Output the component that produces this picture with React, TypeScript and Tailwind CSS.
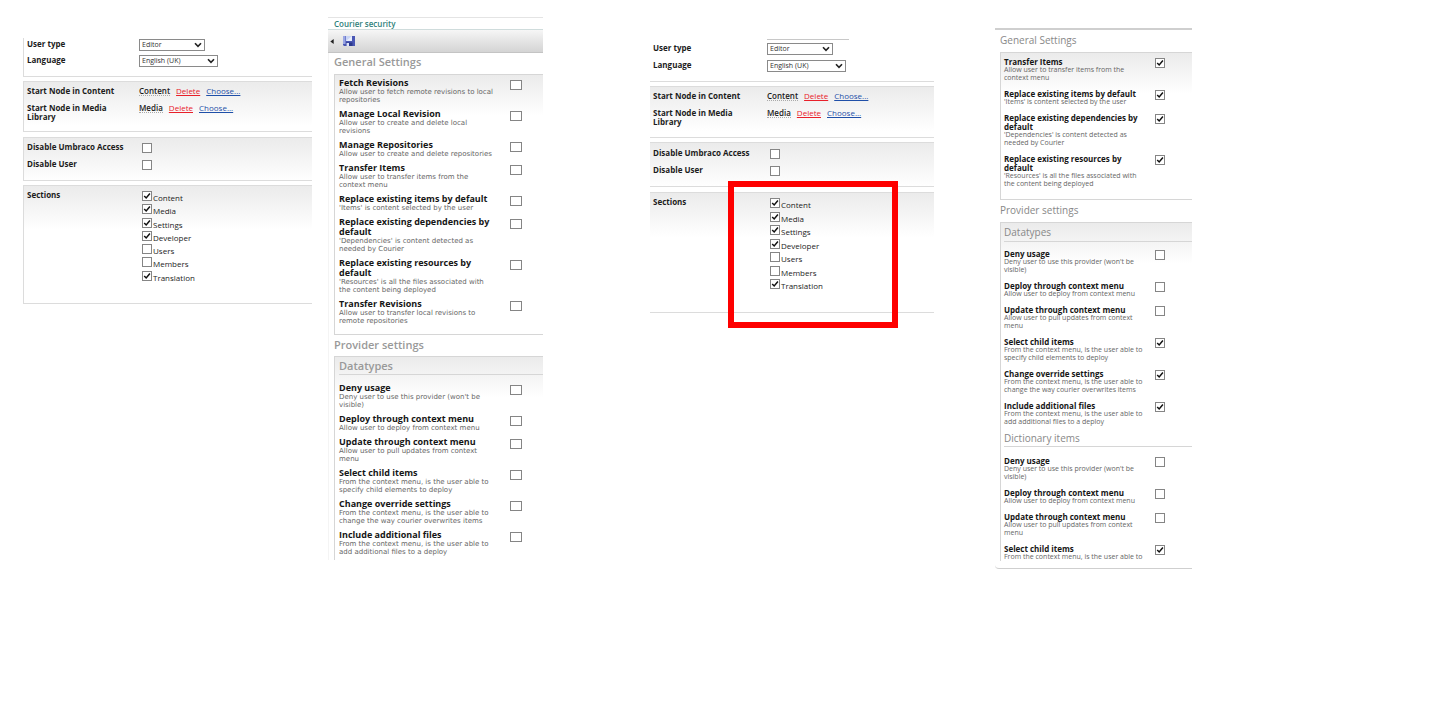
import React, { useId } from "react";

type Setting = { title: string; text: string; on?: boolean };

const cx = (...c: (string | false | undefined)[]) => c.filter(Boolean).join(" ");

function Tick({ id, checked, wide, label }: { id?: string; checked?: boolean; wide?: boolean; label?: string }) {
  return (
    <span className={cx("inline-grid h-[10px] shrink-0", wide ? "w-[12px]" : "w-[10px]")}>
      <input
        id={id}
        type="checkbox"
        aria-label={label}
        defaultChecked={checked}
        className="peer col-start-1 row-start-1 h-full w-full appearance-none border border-[#858585] bg-white"
      />
      <svg
        viewBox="0 0 10 10"
        className="pointer-events-none invisible col-start-1 row-start-1 h-[10px] w-[10px] peer-checked:visible"
        fill="none"
        stroke="#111"
        strokeWidth="1.5"
      >
        <path d="M2.2 4.9 L4.2 7 L7.9 2.6" />
      </svg>
    </span>
  );
}

function SelectBox({ id, value, options, width }: { id: string; value: string; options: string[]; width: string }) {
  return (
    <span className={cx("inline-grid items-center", width)}>
      <select
        id={id}
        defaultValue={value}
        className="col-start-1 row-start-1 h-[12px] w-full appearance-none border border-[#8a8a8a] bg-white pl-[2px] text-[7px] leading-[10px] text-[#333]"
      >
        {options.map((o) => (
          <option key={o}>{o}</option>
        ))}
      </select>
      <svg
        viewBox="0 0 8 6"
        className="pointer-events-none col-start-1 row-start-1 mr-[3px] h-[6px] w-[8px] justify-self-end"
        fill="none"
        stroke="#222"
        strokeWidth="1.6"
      >
        <path d="M1 1.2 L4 4.4 L7 1.2" />
      </svg>
    </span>
  );
}

const sections: [string, boolean][] = [
  ["Content", true],
  ["Media", true],
  ["Settings", true],
  ["Developer", true],
  ["Users", false],
  ["Members", false],
  ["Translation", true],
];

const block = "border-y border-[#dcdcdc] pl-[3px]";
const shade = "bg-linear-to-b from-[#ebebeb] to-white to-[44px]";
const narrowRow = "grid grid-cols-[112px_1fr]";
const wideRow = "grid grid-cols-[114px_1fr]";

function NodeRow({ label, node, row }: { label: string; node: string; row: string }) {
  return (
    <div className={row}>
      <span className="whitespace-pre-line font-bold leading-[9px]">{label}</span>
      <span className="flex h-[9px] items-start gap-[6px] leading-[9px]">
        <span className="border-b border-dotted border-[#aaa] font-semibold">{node}</span>
        <a href="#delete" className="text-[#e8202a] underline">Delete</a>
        <a href="#choose" className="text-[#1f4fa8] underline">Choose...</a>
      </span>
    </div>
  );
}

function UserPanel({ highlighted }: { highlighted?: boolean }) {
  const id = useId();
  const h = highlighted;
  const row = h ? wideRow : narrowRow;
  return (
    <section className={cx("relative mt-[38px] w-full text-[8px] text-[#1c1c1c]", h ? "max-w-[284px]" : "max-w-[289px]")}>
      <div className={cx("border-b border-[#dcdcdc] pl-[3px]", h ? "h-[44px]" : "h-[39px] border-l")}>
        {h && <div className="ml-[114px] h-[2px] w-[82px] border-b border-[#c8c8c8]" />}
        <div className={cx("flex flex-col", h ? "gap-[5px] pt-[3px]" : "gap-[4px] pt-px")}>
          <div className={row}>
            <label htmlFor={id + "type"} className="font-bold leading-[10px]">User type</label>
            <SelectBox id={id + "type"} value="Editor" options={["Editor", "Writer", "Administrator"]} width="w-[66px]" />
          </div>
          <div className={row}>
            <label htmlFor={id + "lang"} className="font-bold leading-[10px]">Language</label>
            <SelectBox id={id + "lang"} value="English (UK)" options={["English (UK)", "Dansk"]} width="w-[79px]" />
          </div>
        </div>
      </div>

      <div className={cx(block, shade, "mt-[4px] flex flex-col gap-[8px] pt-[4px]", h ? "h-[52px]" : "h-[51px] border-l")}>
        <NodeRow row={row} label="Start Node in Content" node="Content" />
        <NodeRow row={row} label={"Start Node in Media\nLibrary"} node="Media" />
      </div>

      <div className={cx(block, shade, "flex flex-col gap-[6px]", h ? "mt-[4px] h-[45px] pt-[5px]" : "mt-[5px] h-[44px] border-l pt-[4px]")}>
        {["Disable Umbraco Access", "Disable User"].map((t) => (
          <div key={t} className={row}>
            <label htmlFor={id + t} className="font-bold leading-[9px]">{t}</label>
            <span className="flex pl-[3px] pt-px">
              <Tick id={id + t} />
            </span>
          </div>
        ))}
      </div>

      <div className={cx(block, shade, row, h ? "mt-[5px] h-[121px] pt-[4px]" : "mt-[4px] h-[119px] border-l pt-[4px]")}>
        <span className="font-bold leading-[9px]">Sections</span>
        <ul className={cx("grid grid-rows-7 pl-[3px] pt-px", h ? "h-[96px]" : "h-[94px]")}>
          {sections.map(([name, on]) => (
            <li key={name} className="flex items-start gap-px">
              <Tick id={id + name} checked={on} />
              <label htmlFor={id + name} className="pt-px leading-[11px]">{name}</label>
            </li>
          ))}
        </ul>
      </div>

      {h && <div className="pointer-events-none absolute left-[78px] top-[143px] h-[147px] w-[170px] border-[6px] border-[#fe0000]" />}
    </section>
  );
}

const fetchRev: Setting = { title: "Fetch Revisions", text: "Allow user to fetch remote revisions to local\nrepositories" };
const localRev: Setting = { title: "Manage Local Revision", text: "Allow user to create and delete local\nrevisions" };
const repos: Setting = { title: "Manage Repositories", text: "Allow user to create and delete repositories" };
const transferRev: Setting = { title: "Transfer Revisions", text: "Allow user to transfer local revisions to\nremote repositories" };
const transfers: Setting[] = [
  { title: "Transfer Items", text: "Allow user to transfer items from the\ncontext menu", on: true },
  { title: "Replace existing items by default", text: "'Items' is content selected by the user", on: true },
  { title: "Replace existing dependencies by\ndefault", text: "'Dependencies' is content detected as\nneeded by Courier", on: true },
  { title: "Replace existing resources by\ndefault", text: "'Resources' is all the files associated with\nthe content being deployed", on: true },
];
const provider: Setting[] = [
  { title: "Deny usage", text: "Deny user to use this provider (won't be\nvisible)" },
  { title: "Deploy through context menu", text: "Allow user to deploy from context menu" },
  { title: "Update through context menu", text: "Allow user to pull updates from context\nmenu" },
  { title: "Select child items", text: "From the context menu, is the user able to\nspecify child elements to deploy", on: true },
  { title: "Change override settings", text: "From the context menu, is the user able to\nchange the way courier overwrites items", on: true },
  { title: "Include additional files", text: "From the context menu, is the user able to\nadd additional files to a deploy", on: true },
];
const off = (list: Setting[]) => list.map((s) => ({ ...s, on: false }));

function SettingList({ items, wide }: { items: Setting[]; wide?: boolean }) {
  const id = useId();
  return (
    <ul className={cx("flex flex-col", wide ? "gap-[5px]" : "gap-[7px]")}>
      {items.map((s, i) => (
        <li key={s.title} className={cx("grid whitespace-pre", wide ? "grid-cols-[171px_1fr]" : "grid-cols-[151px_1fr]")}>
          <label htmlFor={id + i} className="block">
            <span className={cx("block font-bold text-[#161616]", wide ? "text-[9px] leading-[10px]" : "text-[8px] leading-[9px]")}>{s.title}</span>
            <span className={cx("block text-[7px] leading-[8px] text-[#666]", wide && "font-['DejaVu_Sans',sans-serif]")}>{s.text}</span>
          </label>
          <span className={cx("flex h-[12px]", wide ? "pt-[2px]" : "pt-px")}>
            <Tick id={id + i} checked={s.on} wide={wide} />
          </span>
        </li>
      ))}
    </ul>
  );
}

const heading = "leading-[12px]";
const card = "border-l border-t border-[#d6d6d6]";
const fade = "bg-linear-to-b from-[#ebebeb] to-white to-[40px]";

function CourierPanel() {
  return (
    <section className="mt-[17px] w-full max-w-[215px] border-t border-[#e4e4e4]">
      <h1 className="border-b border-[#cfdcdc] pl-[6px] text-[8px] font-semibold leading-[11px] text-[#2f7f7a]">Courier security</h1>
      <div className="flex h-[23px] items-center border-b border-[#c4c4c4] bg-linear-to-b from-[#f6f6f6] to-[#d4d4d4] pl-[2px]">
        <svg viewBox="0 0 4 6" className="h-[5px] w-[4px]" fill="#222">
          <path d="M4 0 V6 L0 3 Z" />
        </svg>
        <button type="button" aria-label="Save" className="ml-[9px]">
          <svg viewBox="0 0 12 10" className="h-[10px] w-[12px]">
            <path d="M0 0 H12 V10 H1 L0 9 Z" fill="#4a57b4" />
            <path d="M0 0 H2.5 V8 H0 Z" fill="#9aa6e4" />
            <path d="M3 0 H9 V5 H3 Z" fill="#c9d4f4" />
            <path d="M3 5 L9 0 V5 Z" fill="#e8eefc" />
            <path d="M3 6.5 H9.5 V10 H3 Z" fill="#2c3a8c" />
            <path d="M3.5 7 H6 V10 H3.5 Z" fill="#dfe5fa" />
          </svg>
        </button>
      </div>
      <div className="border-l border-[#f4f4f4] pl-[5px]">
        <h2 className={cx(heading, "pb-[6px] pt-[3px] text-[11px] font-semibold text-[#999]")}>General Settings</h2>
        <div className={cx(card, fade, "border-b pb-[9px] pl-[4px] pt-[3px]")}>
          <SettingList wide items={[fetchRev, localRev, repos, ...off(transfers), transferRev]} />
        </div>
        <h2 className={cx(heading, "pb-[5px] pt-[4px] text-[11px] font-semibold text-[#999]")}>Provider settings</h2>
        <div className={cx(card, fade, "pb-[4px] pl-[4px]")}>
          <h3 className={cx(heading, "mb-[8px] border-b border-[#d6d6d6] pb-[2px] pt-[3px] text-[11px] font-semibold text-[#999]")}>Datatypes</h3>
          <SettingList wide items={off(provider)} />
        </div>
      </div>
    </section>
  );
}

function PermissionPanel() {
  return (
    <section className="mt-[28px] w-full max-w-[197px] rounded-bl border-b border-t-2 border-b-[#cfcfcf] border-t-[#cfcfcf] pl-[5px]">
      <h2 className={cx(heading, "pb-[6px] pt-[4px] text-[10px] font-medium text-[#888]")}>General Settings</h2>
      <div className={cx(card, fade, "border-b pb-[11px] pl-[3px] pt-[4px]")}>
        <SettingList items={transfers} />
      </div>
      <h2 className={cx(heading, "pb-[6px] pt-[4px] text-[10px] font-medium text-[#888]")}>Provider settings</h2>
      <div className={cx(card, fade, "mb-[7px] pl-[3px]")}>
        <h3 className={cx(heading, "mb-[7px] border-b border-[#d6d6d6] pb-[3px] pt-[3px] text-[10px] font-medium text-[#888]")}>Datatypes</h3>
        <SettingList items={provider} />
        <h3 className={cx(heading, "mb-[9px] mt-[6px] border-b border-[#d6d6d6] pb-[2px] text-[10px] font-medium text-[#888]")}>Dictionary items</h3>
        <SettingList
          items={[...provider.slice(0, 3), { title: "Select child items", text: "From the context menu, is the user able to", on: true }]}
        />
      </div>
    </section>
  );
}

export default function App() {
  return (
    <main className="grid min-h-screen grid-cols-[305fr_322fr_345fr_447fr] items-start bg-white pl-[23px] font-['Open_Sans','Noto_Sans',sans-serif]">
      <UserPanel />
      <CourierPanel />
      <UserPanel highlighted />
      <PermissionPanel />
    </main>
  );
}
